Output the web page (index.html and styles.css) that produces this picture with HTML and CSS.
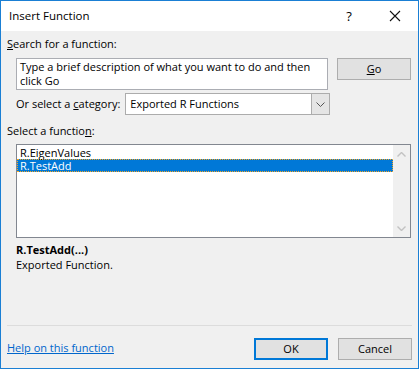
FILE: index.html
```html
<!DOCTYPE html>
<html lang="en">
  <head>
    <meta charset="UTF-8" />
    <title>Insert Function</title>
    <link rel="stylesheet" href="styles.css">
  </head>
  <body>
    <div class="dialog">
      <div class="titlebar">
        <span class="title">Insert Function</span>
        <span class="help">?</span>
        <span class="close">
          <svg width="12" height="12" viewBox="0 0 12 12"><path d="M1 1 L11 11 M11 1 L1 11" stroke="#111" stroke-width="1.1" fill="none"/></svg>
        </span>
      </div>

      <div class="content">
        <div class="label"><u>S</u>earch for a function:</div>
        <div class="search-row">
          <div class="textbox">Type a brief description of what you want to do and then click Go</div>
          <button class="btn"><u>G</u>o</button>
        </div>

        <div class="category-row">
          <span>Or select a <u>c</u>ategory:</span>
          <div class="select">
            <span class="select-value">Exported R Functions</span>
            <span class="select-drop">
              <svg width="9" height="5" viewBox="0 0 9 5"><path d="M0.5 0.5 L4.5 4.5 L8.5 0.5" stroke="#555" stroke-width="1" fill="none"/></svg>
            </span>
          </div>
        </div>

        <div class="label list-label">Select a functio<u>n</u>:</div>
        <div class="listbox">
          <div class="items">
            <div class="item">R.EigenValues</div>
            <div class="item selected">R.TestAdd</div>
          </div>
          <div class="scrollbar">
            <svg width="9" height="5" viewBox="0 0 9 5"><path d="M0.5 4.5 L4.5 0.5 L8.5 4.5" stroke="#c2c2c2" stroke-width="1.4" fill="none"/></svg>
            <svg width="9" height="5" viewBox="0 0 9 5"><path d="M0.5 0.5 L4.5 4.5 L8.5 0.5" stroke="#c2c2c2" stroke-width="1.4" fill="none"/></svg>
          </div>
        </div>

        <div class="signature">R.TestAdd(...)</div>
        <div class="desc">Exported Function.</div>

        <div class="separator"></div>
        <div class="footer">
          <a class="help-link" href="#">Help on this function</a>
          <button class="btn default">OK</button>
          <button class="btn">Cancel</button>
        </div>
      </div>
    </div>
  </body>
</html>
```

FILE: styles.css
```css
html,
body {
  margin: 0;
  padding: 0;
  font: 11px/16px "Open Sans", "Noto Sans", sans-serif;
  color: #000;
  background: #f0f0f0;
}

.dialog {
  box-sizing: border-box;
  width: 419px;
  height: 369px;
  border: 1px solid #1a7fd4;
  display: flex;
  flex-direction: column;
  background: #f0f0f0;
}

.titlebar {
  height: 30px;
  flex: none;
  background: #fff;
  display: flex;
  align-items: center;
}
.title {
  padding-left: 8px;
  font-size: 11.5px;
  flex: 1;
}
.help {
  width: 46px;
  text-align: center;
  font-size: 13px;
}
.close {
  width: 46px;
  display: flex;
  justify-content: center;
}

.content {
  flex: 1;
  display: flex;
  flex-direction: column;
  padding: 5px 6px 8px 6px;
}

.label {
  height: 16px;
}

.search-row {
  display: flex;
  align-items: flex-start;
  margin: 6px 0 0 9px;
  gap: 9px;
}
.textbox {
  box-sizing: border-box;
  width: 312px;
  height: 32px;
  padding: 1px 3px;
  background: #fff;
  border: 1px solid #abadb3;
  line-height: 14px;
}

.btn {
  box-sizing: border-box;
  width: 74px;
  height: 22px;
  padding: 0;
  background: #e1e1e1;
  border: 1px solid #adadad;
  font: inherit;
  color: #000;
}
.btn.default {
  border: 2px solid #0078d7;
}

.category-row {
  display: flex;
  align-items: center;
  margin: 3px 0 0 9px;
  gap: 5px;
}
.select {
  box-sizing: border-box;
  width: 205px;
  height: 22px;
  display: flex;
  border: 1px solid #acacac;
  background: #fff;
}
.select-value {
  flex: 1;
  padding-left: 4px;
  line-height: 20px;
}
.select-drop {
  width: 17px;
  background: #e5e5e5;
  border-left: 1px solid #acacac;
  display: flex;
  align-items: center;
  justify-content: center;
}

.list-label {
  margin-top: 8px;
}

.listbox {
  box-sizing: border-box;
  width: 395px;
  height: 94px;
  margin: 5px 0 0 9px;
  border: 1px solid #828790;
  background: #fff;
  display: flex;
}
.items {
  flex: 1;
  padding-top: 1px;
}
.item {
  height: 13px;
  line-height: 13px;
  padding-left: 3px;
}
.item.selected {
  box-sizing: border-box;
  background: #0078d7;
  color: #fff;
  outline: 1px dotted #f5a623;
  outline-offset: -1px;
}
.scrollbar {
  width: 17px;
  background: #f0f0f0;
  display: flex;
  flex-direction: column;
  justify-content: space-between;
  align-items: center;
  padding: 7px 0 6px;
}

.signature {
  margin: 4px 0 0 9px;
  font-weight: bold;
  line-height: 15px;
}
.desc {
  margin-left: 9px;
  line-height: 15px;
}

.separator {
  margin-top: auto;
  height: 1px;
  background: #dcdcdc;
}

.footer {
  display: flex;
  align-items: center;
  margin-top: 12px;
  gap: 10px;
}
.help-link {
  flex: 1;
  margin-bottom: 3px;
  color: #0066cc;
  text-decoration: underline;
}
```
